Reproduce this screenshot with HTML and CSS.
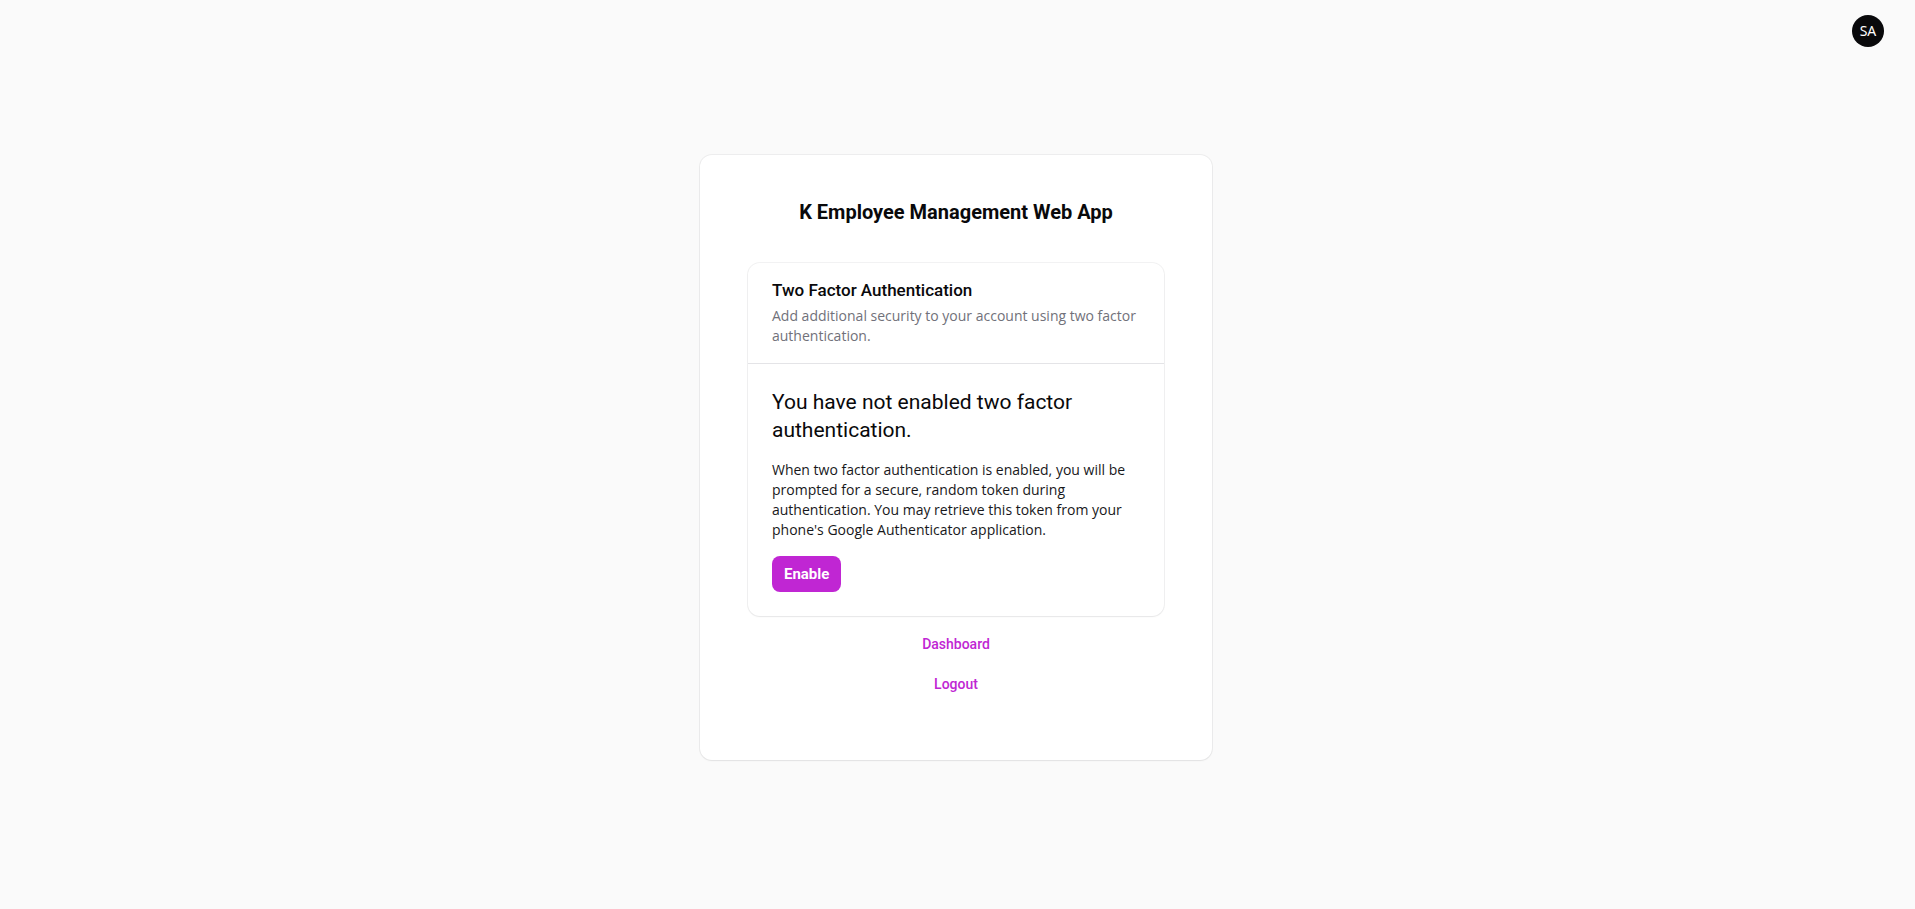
FILE: index.html
```html
<!DOCTYPE html>
<html lang="en">
<head>
<meta charset="utf-8">
<meta name="viewport" content="width=device-width, initial-scale=1">
<title>K Employee Management Web App</title>
<link rel="stylesheet" href="styles.css">
</head>
<body class="page">
<header class="topbar">
<button class="avatar" type="button" aria-label="User menu">SA</button>
</header>
<main class="main">
<div class="card">
<h1 class="title">K Employee Management Web App</h1>
<section class="section">
<header class="section-header">
<h2 class="section-title">Two Factor Authentication</h2>
<p class="section-description">Add additional security to your account using two factor authentication.</p>
</header>
<div class="section-content">
<h3 class="status">You have not enabled two factor authentication.</h3>
<p class="explanation">When two factor authentication is enabled, you will be prompted for a secure, random token during authentication. You may retrieve this token from your phone's Google Authenticator application.</p>
<button class="enable" type="button">Enable</button>
</div>
</section>
<nav class="links">
<a class="link" href="#dashboard">Dashboard</a>
<a class="link" href="#logout">Logout</a>
</nav>
</div>
</main>
</body>
</html>
```
FILE: styles.css
```css
*, *::before, *::after { box-sizing: border-box; }
h1, h2, h3, p { margin: 0; }

.page {
  margin: 0;
  min-height: 100vh;
  display: flex;
  flex-direction: column;
  background: #fafafa;
  color: #09090b;
  font-family: Roboto, sans-serif;
  font-size: 14px;
  line-height: 20px;
}

.topbar {
  display: flex;
  align-items: center;
  justify-content: flex-end;
  height: 62px;
  padding: 0 31px;
}

.avatar {
  width: 32px;
  height: 32px;
  padding: 0;
  border: 0;
  border-radius: 50%;
  background: #09090b;
  color: #fff;
  font: 400 14px/20px "Noto Sans", sans-serif;
}

.main {
  flex: 1;
  display: flex;
  flex-direction: column;
  align-items: center;
  padding: 93px 3px 64px 0;
}

.card {
  width: 100%;
  max-width: 512px;
  padding: 41px 48px 66px;
  border-radius: 12px;
  background: #fff;
  box-shadow: 0 0 0 1px rgba(9, 9, 11, 0.05), 0 1px 2px rgba(0, 0, 0, 0.05);
}

.title {
  font-size: 20px;
  line-height: 32px;
  font-weight: 700;
  text-align: center;
}

.section {
  margin-top: 35px;
  border-radius: 12px;
  background: #fff;
  box-shadow: 0 0 0 1px rgba(9, 9, 11, 0.05), 0 1px 2px rgba(0, 0, 0, 0.05);
}

.section-header {
  display: grid;
  gap: 4px;
  padding: 15px 24px 17px;
}

.section-title {
  font-size: 17px;
  line-height: 24px;
  font-weight: 500;
}

.section-description,
.explanation {
  font-family: "Open Sans", sans-serif;
}

.section-description { color: #71717a; }

.section-content {
  display: grid;
  gap: 16px;
  justify-items: start;
  padding: 24px;
  border-top: 1px solid #e4e4e7;
}

.status {
  font-size: 21px;
  line-height: 28px;
  font-weight: 400;
}

.explanation { color: #18181b; }

.enable {
  padding: 8px 12px;
  border: 0;
  border-radius: 8px;
  background: #c026d3;
  color: #fff;
  font: inherit;
  font-size: 15px;
  line-height: 20px;
  font-weight: 700;
}

.links {
  display: flex;
  flex-direction: column;
  align-items: center;
  gap: 20px;
  margin-top: 18px;
}

.link {
  color: #c026d3;
  font-weight: 500;
  text-decoration: none;
}
```
